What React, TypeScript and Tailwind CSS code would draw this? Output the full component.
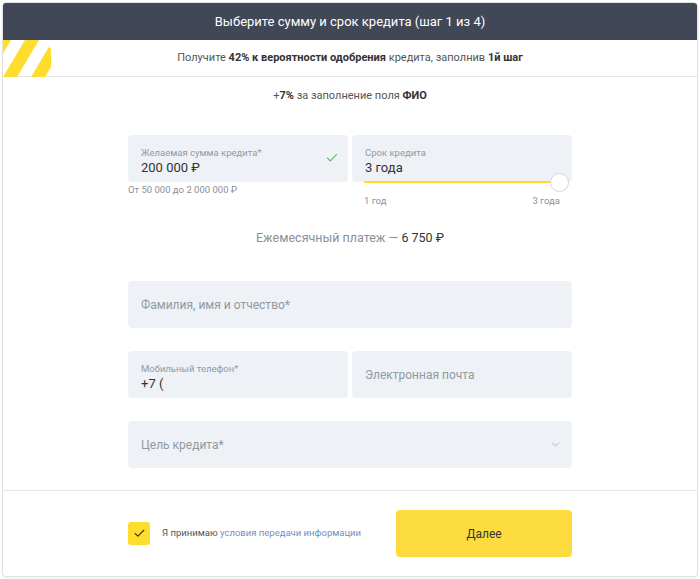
import { Check, ChevronDown } from "lucide-react";

const font = "font-['Roboto',sans-serif]";
const fieldBg = "bg-[#eef1f6]";

function Stripes() {
  return (
    <svg width="48" height="37" viewBox="0 0 48 37" className="absolute left-0 top-0">
      <defs>
        <clipPath id="stripe-clip">
          <polygon points="0,0 38,0 48,9 48,37 0,37" />
        </clipPath>
      </defs>
      <g clipPath="url(#stripe-clip)" fill="#ffdd2d">
        <polygon points="-6,0 8,0 -14,37 -28,37" />
        <polygon points="22,0 36,0 14,37 0,37" />
        <polygon points="50,0 64,0 42,37 28,37" />
      </g>
    </svg>
  );
}

function Field({ label, value, placeholder, right }: { label?: string; value?: string; placeholder?: string; right?: React.ReactNode }) {
  return (
    <div className={`relative h-[47px] shrink-0 rounded-[4px] ${fieldBg} flex-1 flex items-center px-[13px]`}>
      {placeholder ? (
        <span className="text-[12px] text-[#9299a2]">{placeholder}</span>
      ) : (
        <div className="flex flex-col pt-[6px]">
          <span className="text-[9.5px] leading-[13px] text-[#9299a2]">{label}</span>
          <span className="text-[13px] leading-[18px] text-[#333]">{value}</span>
        </div>
      )}
      {right}
    </div>
  );
}

export default function App() {
  return (
    <div className={`p-[2px] bg-white ${font}`}>
      <div className="w-[696px] h-[575px] rounded-[4px] border border-[#e3e3e3] shadow-[0_1px_2px_rgba(0,0,0,0.08)] flex flex-col overflow-hidden bg-white">
        <div className="h-[37px] bg-[#414756] flex items-center justify-center text-white text-[13px]">
          Выберите сумму и срок кредита (шаг 1 из 4)
        </div>
        <div className="relative h-[37px] border-b border-[#e5e5e5] flex items-center justify-center text-[11px] text-[#555]">
          <Stripes />
          <span>
            Получите <b className="text-[#333]">42% к вероятности одобрения</b> кредита, заполнив <b className="text-[#333]">1й шаг</b>
          </span>
        </div>

        <div className="flex-1 flex flex-col items-center">
          <div className="mt-[11px] text-[11px] leading-[16px] text-[#555]">
            +<b className="text-[#333]">7%</b> за заполнение поля <b className="text-[#333]">ФИО</b>
          </div>

          <div className="w-[444px] mt-[31px] flex items-start gap-[4px]">
            <div className="flex-1 flex flex-col">
              <div className="flex">
                <Field
                  label="Желаемая сумма кредита*"
                  value="200 000 ₽"
                  right={<Check className="absolute right-[9px] top-[16px] w-[14px] h-[14px] text-[#4cae4c]" strokeWidth={1.75} />}
                />
              </div>
              <span className="mt-[1px] text-[9.5px] leading-[14px] text-[#8a9099]">От 50 000 до 2 000 000 ₽</span>
            </div>
            <div className="flex-1 flex flex-col">
              <div className="relative flex">
                <Field label="Срок кредита" value="3 года" />
                <div className="absolute left-[12px] right-[12px] bottom-[-1px] h-[2px] bg-[#ffdd2d]" />
                <div className="absolute right-[3px] bottom-[-10px] w-[19px] h-[19px] rounded-full bg-white border border-[#d6d6d6]" />
              </div>
              <div className="mt-[12px] px-[12px] flex justify-between text-[9.5px] leading-[14px] text-[#8a9099]">
                <span>1 год</span>
                <span>3 года</span>
              </div>
            </div>
          </div>

          <div className="mt-[21px] text-[12.5px] leading-[18px] text-[#8a9099]">
            Ежемесячный платеж — <span className="text-[#333]">6 750 ₽</span>
          </div>

          <div className="w-[444px] mt-[34px] flex flex-col gap-[23px]">
            <div className="flex">
              <Field placeholder="Фамилия, имя и отчество*" />
            </div>
            <div className="flex gap-[4px]">
              <Field label="Мобильный телефон*" value="+7 (" />
              <Field placeholder="Электронная почта" />
            </div>
            <div className="flex">
              <Field
                placeholder="Цель кредита*"
                right={<ChevronDown className="absolute right-[10px] top-[17px] w-[13px] h-[13px] text-[#a9afb7]" strokeWidth={1.5} />}
              />
            </div>
          </div>
        </div>

        <div className="h-[86px] border-t border-[#e5e5e5] flex items-center justify-center">
          <div className="w-[444px] flex items-center justify-between">
            <div className="flex items-center">
              <div className="w-[22px] h-[23px] rounded-[3px] bg-[#ffdd2d] flex items-center justify-center">
                <Check className="w-[13px] h-[13px] text-[#333]" strokeWidth={2} />
              </div>
              <span className="ml-[12px] text-[9.5px] text-[#555]">
                Я принимаю <span className="text-[#7390c0]">условия передачи информации</span>
              </span>
            </div>
            <button className="w-[176px] h-[47px] rounded-[4px] bg-[#fcdc3f] text-[12px] text-[#333]">
              Далее
            </button>
          </div>
        </div>
      </div>
    </div>
  );
}
